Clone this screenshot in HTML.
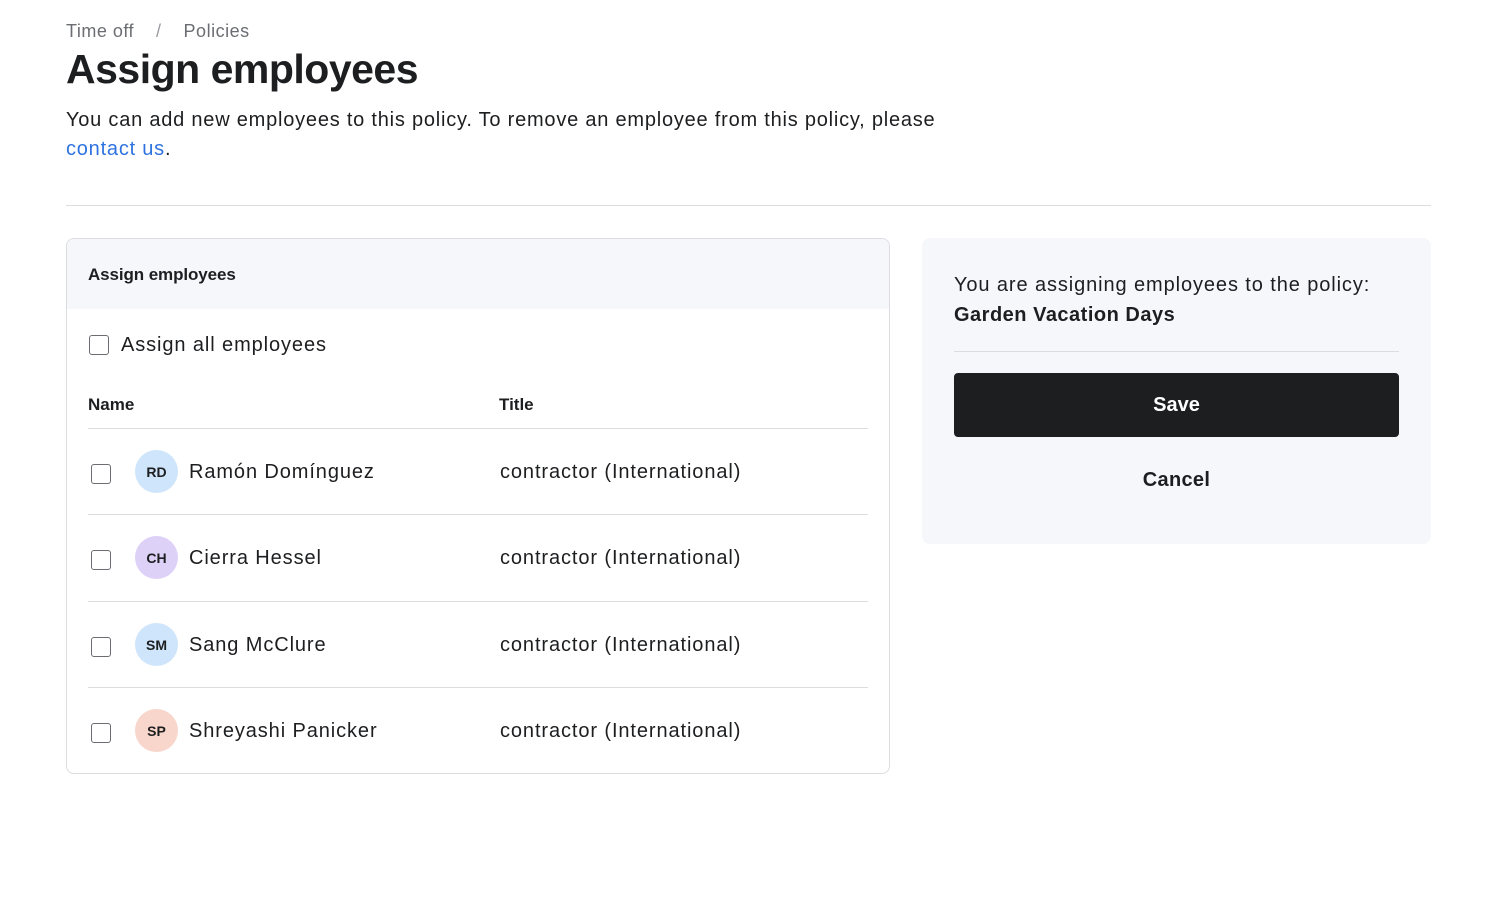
<!DOCTYPE html>
<html><head><meta charset="utf-8"><style>
*{box-sizing:border-box;margin:0;padding:0}
body{width:1506px;height:924px;background:#fff;font-family:"Liberation Sans",sans-serif;color:#1d1e20;position:relative;overflow:hidden}
.abs{position:absolute}
.crumb{left:66px;top:21px;font-size:18px;color:#6b6d72;white-space:nowrap;letter-spacing:0.5px}
h1{position:absolute;left:66px;top:46px;font-size:41px;font-weight:700;letter-spacing:-0.5px}
.desc{left:66px;top:106px;font-size:20px;line-height:29px;letter-spacing:0.78px;width:950px}
.desc a{color:#2f73e0;text-decoration:none}
.hr{left:66px;top:205px;width:1365px;height:1px;background:#dcdde1}
.card{left:66px;top:238px;width:824px;height:536px;border:1px solid #dcdde1;border-radius:8px;overflow:hidden}
.card .hd{height:70px;background:#f6f7fb;padding:26px 21px;font-size:17px;font-weight:700;letter-spacing:-0.1px}
.cb{position:absolute;width:20px;height:20px;border:1.5px solid #6b6d72;border-radius:3px;background:#fff}
.t{position:absolute;font-size:20px;white-space:nowrap;letter-spacing:0.9px}
.th{position:absolute;font-size:17px;font-weight:700;top:156px}
.line{position:absolute;left:21px;width:780px;height:1px;background:#dcdde1}
.av{position:absolute;left:68px;width:43px;height:43px;border-radius:50%;font-size:14px;font-weight:700;display:flex;align-items:center;justify-content:center}
.side{left:922px;top:238px;width:509px;height:306px;background:#f6f7fb;border-radius:8px}
.btn{position:absolute;left:32px;top:135px;width:445px;height:64px;background:#1d1e20;border-radius:4px;color:#fff;font-size:20px;font-weight:700;display:flex;align-items:center;justify-content:center}
</style></head><body>
<div class="abs crumb">Time off&nbsp;&nbsp;&nbsp;&nbsp;<span style="color:#9a9ca0">/</span>&nbsp;&nbsp;&nbsp;&nbsp;Policies</div>
<h1>Assign employees</h1>
<div class="abs desc">You can add new employees to this policy. To remove an employee from this policy, please<br><a>contact us</a>.</div>
<div class="abs hr"></div>
<div class="abs card">
<div class="hd">Assign employees</div>
<div class="cb" style="left:22px;top:96px"></div>
<div class="t" style="left:54px;top:95px">Assign all employees</div>
<div class="th" style="left:21px">Name</div>
<div class="th" style="left:432px">Title</div>
<div class="line" style="top:189px"></div>

<div class="cb" style="left:24px;top:225px"></div>
<div class="av" style="top:211px;background:#cfe5fb">RD</div>
<div class="t" style="left:122px;top:222px">Ramón Domínguez</div>
<div class="t" style="left:433px;top:222px">contractor (International)</div>
<div class="line" style="top:275px"></div>

<div class="cb" style="left:24px;top:311px"></div>
<div class="av" style="top:297px;background:#ddd1f8">CH</div>
<div class="t" style="left:122px;top:308px">Cierra Hessel</div>
<div class="t" style="left:433px;top:308px">contractor (International)</div>
<div class="line" style="top:362px"></div>

<div class="cb" style="left:24px;top:398px"></div>
<div class="av" style="top:384px;background:#cfe5fb">SM</div>
<div class="t" style="left:122px;top:395px">Sang McClure</div>
<div class="t" style="left:433px;top:395px">contractor (International)</div>
<div class="line" style="top:448px"></div>

<div class="cb" style="left:24px;top:484px"></div>
<div class="av" style="top:470px;background:#f8d6cc">SP</div>
<div class="t" style="left:122px;top:481px">Shreyashi Panicker</div>
<div class="t" style="left:433px;top:481px">contractor (International)</div>
</div>
<div class="abs side">
<div class="t" style="left:32px;top:36px">You are assigning employees to the policy:</div>
<div class="t" style="left:32px;top:66px;font-weight:700;letter-spacing:0.5px">Garden Vacation Days</div>
<div style="position:absolute;left:32px;top:113px;width:445px;height:1px;background:#dcdde1"></div>
<div class="btn">Save</div>
<div class="t" style="left:32px;width:445px;text-align:center;top:231px;font-weight:700;letter-spacing:0.3px">Cancel</div>
</div>
</body></html>
